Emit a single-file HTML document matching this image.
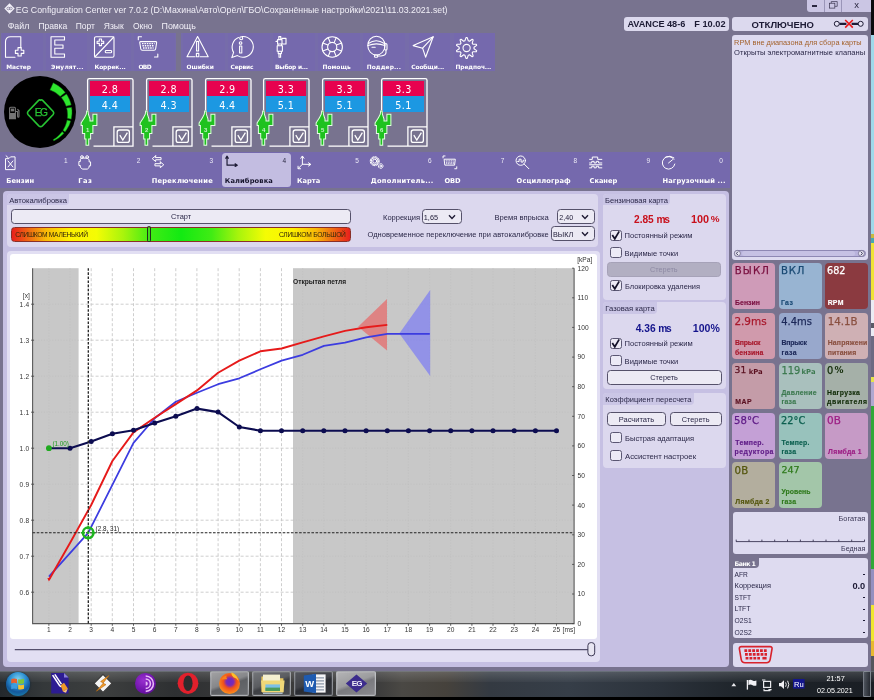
<!DOCTYPE html>
<html lang="ru"><head><meta charset="utf-8"><title>EG Configuration Center</title>
<style>
*{box-sizing:border-box;margin:0;padding:0}
html,body{width:874px;height:700px;overflow:hidden;background:#78738f}
body{font-family:"Liberation Sans",sans-serif;color:#222;position:relative}
#root{position:absolute;left:0;top:0;width:874px;height:700px;overflow:hidden;will-change:transform}
.a{position:absolute}
.t{position:absolute;white-space:nowrap;line-height:1}
.dj{font-family:"DejaVu Sans","Liberation Sans",sans-serif}
.b{font-weight:bold}
.tb{position:absolute;top:33px;height:38px;width:40px;background:#7569ad}
.tbl{position:absolute;white-space:nowrap;line-height:1;color:#fff;font-family:"DejaVu Sans","Liberation Sans",sans-serif;font-weight:bold;font-size:6.6px;top:62.5px;letter-spacing:.1px}
.tab{position:absolute;top:151px;height:37px;background:#7569ad}
.tabl{position:absolute;white-space:nowrap;line-height:1;color:#fff;font-family:"DejaVu Sans","Liberation Sans",sans-serif;font-weight:bold;font-size:7px;top:176px;letter-spacing:.55px}
.tabn{position:absolute;white-space:nowrap;line-height:1;color:#e8e6f4;font-size:6.5px;top:158px}
svg{position:absolute;overflow:visible}
.ic{fill:none;stroke:#fff;stroke-width:1.1;stroke-linecap:round;stroke-linejoin:round}
.cb{position:absolute;width:11.4px;height:11.2px;border:1px solid #5a5672;border-radius:2.5px;background:#eceaf6}
.lbl{position:absolute;white-space:nowrap;line-height:1;font-size:9.4px;color:#2b2840}
.btn{position:absolute;border:1px solid #55516a;border-radius:3.5px;background:#eceaf4}
.grp{position:absolute;background:#dcd8ee;border-radius:4px}
.tile{position:absolute;width:43px;height:46px;border-radius:4px}
.tv{position:absolute;left:2px;top:3px;white-space:nowrap;line-height:1;font-family:"DejaVu Sans","Liberation Sans",sans-serif;font-size:11.5px}
.tl{position:absolute;left:2.5px;white-space:nowrap;line-height:1;font-family:"DejaVu Sans","Liberation Sans",sans-serif;font-weight:bold;font-size:6.6px}
</style></head><body><div id="root">
<svg style="left:4px;top:3px" width="11" height="11" viewBox="0 0 11 11"><path d="M5.5 0.3 L10.7 5.5 L5.5 10.7 L0.3 5.5Z" fill="#f4f2fa"/><ellipse cx="4.4" cy="5.5" rx="1.5" ry="1.3" fill="none" stroke="#78738f" stroke-width=".7"/><ellipse cx="6.7" cy="5.5" rx="1.5" ry="1.3" fill="none" stroke="#78738f" stroke-width=".7"/></svg><div class="t" style="left:15.80px;top:6.00px;font-size:8.76px;color:#f2f0f8;">EG Configuration Center ver 7.0.2 (D:\Махина\Авто\Орёл\ГБО\Сохранённые настройки\2021\11.03.2021.set)</div><div class="t" style="left:7.70px;top:22.00px;font-size:8.79px;color:#f2f0f8;">Файл</div><div class="t" style="left:38.40px;top:22.00px;font-size:8.56px;color:#f2f0f8;">Правка</div><div class="t" style="left:75.70px;top:22.00px;font-size:8.47px;color:#f2f0f8;">Порт</div><div class="t" style="left:103.80px;top:22.00px;font-size:8.52px;color:#f2f0f8;">Язык</div><div class="t" style="left:132.90px;top:22.00px;font-size:8.48px;color:#f2f0f8;">Окно</div><div class="t" style="left:161.50px;top:22.00px;font-size:8.88px;color:#f2f0f8;">Помощь</div><div class="a" style="left:807.1px;top:0;width:64.2px;height:11.7px;background:#cbc6e4;border-radius:0 0 0 3px"></div><div class="a" style="left:823.5px;top:0;width:1px;height:11.5px;background:#9a95b8"></div><div class="a" style="left:841.2px;top:0;width:1px;height:11.5px;background:#9a95b8"></div><div class="a" style="left:812px;top:5px;width:5px;height:1.6px;background:#2b2840"></div><svg style="left:829.4px;top:1.2px" width="9" height="8" viewBox="0 0 10 9"><rect x="0.5" y="2.5" width="6" height="5.5" fill="none" stroke="#3a3650" stroke-width=".8"/><path d="M2.5 2.5V.6H9.2V6H6.5" fill="none" stroke="#3a3650" stroke-width=".8"/></svg><div class="t" style="left:854.3px;top:0.3px;font-size:9.5px;color:#2b2840">x</div><div class="a" style="left:0.8px;top:33.1px;width:175.6px;height:38.3px;background:#766caa"></div><div class="a" style="left:181.4px;top:33.1px;width:314px;height:38.3px;background:#766caa"></div><div class="tb" style="left:2px;width:41.4px;top:33.1px;height:38.3px"></div><svg style="left:3px;top:33px" width="40" height="38" viewBox="0 0 40 38"><path class="ic" d="M7.5 3.8H17.8V14.5M12 24.3H2.5V8.8Q2.5 3.8 7.5 3.8"/><path class="ic" d="M15 14.6h3.2v2.6h2.6v3.2h-2.6v2.6H15v-2.6h-2.6v-3.2H15z" stroke-width="1"/></svg><div class="t" style="left:6.30px;top:65.00px;font-size:5.90px;color:#fff;font-weight:bold;font-family:'DejaVu Sans','Liberation Sans',sans-serif;letter-spacing:-0.079px;">Мастер</div><div class="tb" style="left:46px;width:41.4px;top:33.1px;height:38.3px"></div><svg style="left:47px;top:33px" width="40" height="38" viewBox="0 0 40 38"><path class="ic" d="M4 3.8H17.5V7H7.8V12H16V15.2H7.8V21H17.5V24.3H4Z"/></svg><div class="t" style="left:50.90px;top:65.00px;font-size:5.90px;color:#fff;font-weight:bold;font-family:'DejaVu Sans','Liberation Sans',sans-serif;letter-spacing:0.169px;">Эмулят...</div><div class="tb" style="left:90px;width:41.4px;top:33.1px;height:38.3px"></div><svg style="left:91px;top:33px" width="40" height="38" viewBox="0 0 40 38"><rect class="ic" x="3.5" y="3.8" width="19.5" height="20.5" rx="1.5"/><path class="ic" d="M3.8 24 L22.8 4"/><path class="ic" d="M8.3 6h2.2v2.2h2.2v2.2h-2.2v2.2H8.3v-2.2H6.1V8.2h2.2z" stroke-width=".9"/><rect class="ic" x="14.3" y="17.5" width="6.3" height="2.3" rx=".8" stroke-width=".9"/></svg><div class="t" style="left:94.40px;top:65.00px;font-size:5.90px;color:#fff;font-weight:bold;font-family:'DejaVu Sans','Liberation Sans',sans-serif;letter-spacing:-0.069px;">Коррек...</div><div class="tb" style="left:134px;width:41.4px;top:33.1px;height:38.3px"></div><svg style="left:135px;top:33px" width="40" height="38" viewBox="0 0 40 38"><path class="ic" d="M3.3 6.8V3.8H6.5M19.5 24H22.8V21"/><path class="ic" d="M5.6 8.6H20.8Q21.8 8.6 21.6 9.8L20.6 16Q20.4 17.2 19.2 17.2H7.2Q6 17.2 5.8 16L4.8 9.8Q4.6 8.6 5.6 8.6Z"/><path d="M7 10.6h12.6M7.4 12.8h11.8M8 15h10.6" stroke="#fff" stroke-width="1.4" stroke-dasharray="1.5 .9" fill="none"/></svg><div class="t" style="left:138.40px;top:65.00px;font-size:5.90px;color:#fff;font-weight:bold;font-family:'DejaVu Sans','Liberation Sans',sans-serif;letter-spacing:-0.605px;">OBD</div><div class="tb" style="left:183px;width:41.8px;top:33.1px;height:38.3px"></div><svg style="left:183px;top:33px" width="40" height="38" viewBox="0 0 40 38"><path class="ic" d="M14.6 3.6L25.2 23.8H17.2M12 23.8H4L14.6 3.6"/><path class="ic" d="M13.6 8.4h2v9.6h-2z" stroke-width=".9"/><path class="ic" d="M13.4 20.4h2.4v3.4h-2.4z" stroke-width=".9"/></svg><div class="t" style="left:186.50px;top:65.00px;font-size:5.90px;color:#fff;font-weight:bold;font-family:'DejaVu Sans','Liberation Sans',sans-serif;letter-spacing:-0.035px;">Ошибки</div><div class="tb" style="left:228.1px;width:41.8px;top:33.1px;height:38.3px"></div><svg style="left:228.1px;top:33px" width="40" height="38" viewBox="0 0 40 38"><path class="ic" d="M14.2 3.6A10.3 10.3 0 1 1 9.5 22.6L3.8 24.6L5.6 19.4A10.3 10.3 0 0 1 10.5 4.6"/><circle class="ic" cx="13.2" cy="5.2" r="1.5" stroke-width=".9"/><circle class="ic" cx="12.6" cy="10" r="1.3" stroke-width=".9"/><path class="ic" d="M11.6 13h2.2v7h-2.2z" stroke-width=".9"/></svg><div class="t" style="left:230.60px;top:65.00px;font-size:5.90px;color:#fff;font-weight:bold;font-family:'DejaVu Sans','Liberation Sans',sans-serif;letter-spacing:-0.184px;">Сервис</div><div class="tb" style="left:273.2px;width:41.8px;top:33.1px;height:38.3px"></div><svg style="left:273.2px;top:33px" width="40" height="38" viewBox="0 0 40 38"><path class="ic" transform="translate(-5.4 0)" d="M11.2 3.6h2v3h-2zM10 6.6h4.4V11H10zM14.4 5.4h4V11h-4M10.4 11v1.8h3.6V11M9.6 12.8h5.2v5.4H9.6zM10.6 18.2v2.4h3.2v-2.4M11.4 20.6v3.6h1.6v-3.6M8.4 8.4H10"/></svg><div class="t" style="left:275.10px;top:65.00px;font-size:5.90px;color:#fff;font-weight:bold;font-family:'DejaVu Sans','Liberation Sans',sans-serif;letter-spacing:-0.238px;">Выбор и...</div><div class="tb" style="left:318.3px;width:41.8px;top:33.1px;height:38.3px"></div><svg style="left:318.3px;top:33px" width="40" height="38" viewBox="0 0 40 38"><circle class="ic" cx="14.2" cy="14" r="10.2"/><circle class="ic" cx="14.2" cy="14" r="4.6"/><path class="ic" d="M10.2 4.6L12.3 9.8M18.2 4.6L16.1 9.8M10.2 23.4L12.3 18.2M18.2 23.4L16.1 18.2M4.8 10L10 12.1M4.8 18L10 15.9M23.6 10L18.4 12.1M23.6 18L18.4 15.9"/></svg><div class="t" style="left:322.50px;top:65.00px;font-size:5.90px;color:#fff;font-weight:bold;font-family:'DejaVu Sans','Liberation Sans',sans-serif;letter-spacing:0.016px;">Помощь</div><div class="tb" style="left:363.4px;width:41.8px;top:33.1px;height:38.3px"></div><svg style="left:363.4px;top:33px" width="40" height="38" viewBox="0 0 40 38"><ellipse class="ic" cx="13.4" cy="12.6" rx="8.6" ry="9.4"/><path class="ic" d="M5.4 10.5Q13 5 21.4 10.5M5 12.6Q13.4 9.2 21.8 12.6"/><rect class="ic" x="21.6" y="10.6" width="2.4" height="6.4" rx="1.1" stroke-width=".9"/><path class="ic" d="M23 17V19.6Q23 22.6 18 23H14.4"/><rect class="ic" x="11.4" y="22" width="3.4" height="2.2" rx="1" stroke-width=".9"/><path class="ic" d="M9 14.2h3.2"/></svg><div class="t" style="left:366.70px;top:65.00px;font-size:5.90px;color:#fff;font-weight:bold;font-family:'DejaVu Sans','Liberation Sans',sans-serif;letter-spacing:0.104px;">Поддер...</div><div class="tb" style="left:408.5px;width:41.8px;top:33.1px;height:38.3px"></div><svg style="left:408.5px;top:33px" width="40" height="38" viewBox="0 0 40 38"><path class="ic" d="M24.2 3.8L4.2 12.6L13.6 15.2L16.6 24.2Z"/><path class="ic" d="M13.6 15.2L24.2 3.8"/></svg><div class="t" style="left:411.30px;top:65.00px;font-size:5.90px;color:#fff;font-weight:bold;font-family:'DejaVu Sans','Liberation Sans',sans-serif;letter-spacing:-0.117px;">Сообщи...</div><div class="tb" style="left:453.6px;width:41.8px;top:33.1px;height:38.3px"></div><svg style="left:453.6px;top:33px" width="40" height="38" viewBox="0 0 40 38"><circle class="ic" cx="12.6" cy="15" r="3.6"/><path class="ic" d="M12.0 4.6L13.2 4.6L14.3 7.8L15.5 8.2L18.2 6.3L19.2 6.9L18.2 10.1L18.9 11.2L22.3 11.2L22.7 12.4L20.0 14.3L20.0 15.7L22.7 17.6L22.3 18.8L18.9 18.8L18.2 19.9L19.2 23.1L18.2 23.7L15.5 21.8L14.3 22.2L13.2 25.4L12.0 25.4L10.9 22.2L9.7 21.8L7.0 23.7L6.0 23.1L7.0 19.9L6.3 18.8L2.9 18.8L2.5 17.6L5.2 15.7L5.2 14.3L2.5 12.4L2.9 11.2L6.3 11.2L7.0 10.1L6.0 6.9L7.0 6.3L9.7 8.2L10.9 7.8Z"/></svg><div class="t" style="left:455.50px;top:65.00px;font-size:5.90px;color:#fff;font-weight:bold;font-family:'DejaVu Sans','Liberation Sans',sans-serif;letter-spacing:-0.104px;">Предпоч...</div><div class="a" style="left:4px;top:76px;width:72px;height:72px;border-radius:50%;background:#000"></div><svg style="left:0;top:0" width="160" height="160" viewBox="0 0 160 160"><path d="M53.2 82.8L54.9 83.7L56.6 84.7L58.3 85.7L59.8 86.9L61.3 88.1L62.7 89.5L64.1 90.9L65.3 92.4L60.1 96.4L59.0 95.4L57.8 94.4L56.6 93.4L55.3 92.6L54.0 91.8L52.7 91.2L51.3 90.6L49.9 90.1Z M66.5 94.0L67.3 95.3L68.0 96.6L68.7 97.9L69.4 99.3L69.9 100.7L70.4 102.1L70.9 103.6L71.2 105.0L66.1 106.2L65.6 105.0L65.1 103.8L64.6 102.7L64.0 101.6L63.4 100.6L62.7 99.5L62.0 98.5L61.2 97.6Z M71.6 107.3L71.8 108.8L72.0 110.3L72.0 111.8L72.0 113.3L71.9 114.8L71.7 116.2L71.5 117.7L71.2 119.2L67.3 118.3L67.4 117.0L67.5 115.7L67.5 114.4L67.4 113.1L67.3 111.8L67.2 110.5L66.9 109.3L66.6 108.0Z M70.7 121.0L70.2 122.5L69.7 123.9L69.1 125.4L68.4 126.8L67.6 128.1L66.8 129.4L65.9 130.7L65.0 132.0L62.9 130.3L63.7 129.1L64.3 127.8L65.0 126.5L65.5 125.3L66.0 123.9L66.4 122.6L66.8 121.3L67.0 119.9Z M64.0 133.2L62.9 134.4L61.7 135.5L60.5 136.5L59.3 137.5L58.0 138.5L56.6 139.3L55.3 140.1L53.8 140.9L53.2 139.6L54.5 138.8L55.8 137.9L57.0 137.0L58.1 136.0L59.2 134.9L60.2 133.8L61.2 132.7L62.1 131.5Z" fill="#2ee62e" stroke="#0c5c10" stroke-width=".5"/><path d="M40.6 100.2 Q41.6 99.4 42.6 100.4 L53.2 111.4 Q54.4 113 53.2 114.6 L42.4 125.8 Q40.6 127.4 38.8 125.8 L28 114.6 Q26.8 113 28 111.4 L38.6 100.4 Q39.6 99.4 40.6 100.2Z" fill="none" stroke="#27c433" stroke-width="1.6"/><path d="M9.6 118.6V108.2Q9.6 107.2 10.6 107.2H14.4Q15.4 107.2 15.4 108.2V118.6ZM9 118.8H16M15.6 111.5H17.6V116.2Q17.6 117.2 18.3 117.2T19 116.2V110.8L17.4 109.2" fill="none" stroke="#767676" stroke-width="1.1"/><rect x="10.8" y="108.6" width="3.4" height="2.8" fill="#767676"/><rect x="9.8" y="113" width="5.4" height="5.4" fill="#767676"/><text x="40.7" y="116" font-family="Liberation Sans,sans-serif" font-size="10.2" fill="#27c433" stroke="#27c433" stroke-width=".25" text-anchor="middle" letter-spacing="-1.5">EG</text></svg><div class="a" style="left:89.8px;top:80.6px;width:40.4px;height:15.5px;background:#e7024f"></div><div class="a" style="left:89.8px;top:96px;width:40.4px;height:16.2px;background:#1c98e2"></div><div class="t dj" style="left:89.8px;top:84.6px;width:40.4px;text-align:center;font-size:9.6px;color:#fff;letter-spacing:.4px">2.8</div><div class="t dj" style="left:89.8px;top:100.8px;width:40.4px;text-align:center;font-size:9.6px;color:#fff;letter-spacing:.4px">4.4</div><svg style="left:77.3px;top:72px" width="70" height="80" viewBox="0 0 70 80"><path d="M10.6 38.5V8.3Q10.6 6.6 12.3 6.6H54.3Q56 6.6 56 8.3V74.1H16.5" fill="none" stroke="#fff" stroke-width="1.3"/><path d="M36.9 74.1V54.9H56" fill="none" stroke="#fff" stroke-width="1.3"/><rect x="40.2" y="58" width="12.2" height="12.4" rx="2.2" fill="none" stroke="#fff" stroke-width="1.3"/><path d="M42.8 63.2L45.8 68L50.4 60.6" fill="none" stroke="#fff" stroke-width="1.3"/><defs><clipPath id="injc"><path d="M9.2 38.4H11.5L11.9 42L13.5 47V48.4H15.4V41.8H20.4V54H16.4V61.9H14.1V67.5H12.2V73.7H8.5V67.5H7.2V61.9H4.9V54H3.6V50.8L7 45.6L8.8 42Z"/></clipPath></defs><path d="M9.2 38.4H11.5L11.9 42L13.5 47V48.4H15.4V41.8H20.4V54H16.4V61.9H14.1V67.5H12.2V73.7H8.5V67.5H7.2V61.9H4.9V54H3.6V50.8L7 45.6L8.8 42Z" fill="#1fc21f" stroke="#e8fce8" stroke-width="2" stroke-linejoin="miter" clip-path="url(#injc)"/><text x="10.6" y="60.3" font-family="Liberation Sans,sans-serif" font-weight="bold" font-size="6" fill="#c8f4c8" text-anchor="middle">1</text></svg><div class="a" style="left:148.5px;top:80.6px;width:40.4px;height:15.5px;background:#e7024f"></div><div class="a" style="left:148.5px;top:96px;width:40.4px;height:16.2px;background:#1c98e2"></div><div class="t dj" style="left:148.5px;top:84.6px;width:40.4px;text-align:center;font-size:9.6px;color:#fff;letter-spacing:.4px">2.8</div><div class="t dj" style="left:148.5px;top:100.8px;width:40.4px;text-align:center;font-size:9.6px;color:#fff;letter-spacing:.4px">4.3</div><svg style="left:136.0px;top:72px" width="70" height="80" viewBox="0 0 70 80"><path d="M10.6 38.5V8.3Q10.6 6.6 12.3 6.6H54.3Q56 6.6 56 8.3V74.1H16.5" fill="none" stroke="#fff" stroke-width="1.3"/><path d="M36.9 74.1V54.9H56" fill="none" stroke="#fff" stroke-width="1.3"/><rect x="40.2" y="58" width="12.2" height="12.4" rx="2.2" fill="none" stroke="#fff" stroke-width="1.3"/><path d="M42.8 63.2L45.8 68L50.4 60.6" fill="none" stroke="#fff" stroke-width="1.3"/><path d="M9.2 38.4H11.5L11.9 42L13.5 47V48.4H15.4V41.8H20.4V54H16.4V61.9H14.1V67.5H12.2V73.7H8.5V67.5H7.2V61.9H4.9V54H3.6V50.8L7 45.6L8.8 42Z" fill="#1fc21f" stroke="#e8fce8" stroke-width="2" stroke-linejoin="miter" clip-path="url(#injc)"/><text x="10.6" y="60.3" font-family="Liberation Sans,sans-serif" font-weight="bold" font-size="6" fill="#c8f4c8" text-anchor="middle">2</text></svg><div class="a" style="left:207.2px;top:80.6px;width:40.4px;height:15.5px;background:#e7024f"></div><div class="a" style="left:207.2px;top:96px;width:40.4px;height:16.2px;background:#1c98e2"></div><div class="t dj" style="left:207.2px;top:84.6px;width:40.4px;text-align:center;font-size:9.6px;color:#fff;letter-spacing:.4px">2.9</div><div class="t dj" style="left:207.2px;top:100.8px;width:40.4px;text-align:center;font-size:9.6px;color:#fff;letter-spacing:.4px">4.4</div><svg style="left:194.7px;top:72px" width="70" height="80" viewBox="0 0 70 80"><path d="M10.6 38.5V8.3Q10.6 6.6 12.3 6.6H54.3Q56 6.6 56 8.3V74.1H16.5" fill="none" stroke="#fff" stroke-width="1.3"/><path d="M36.9 74.1V54.9H56" fill="none" stroke="#fff" stroke-width="1.3"/><rect x="40.2" y="58" width="12.2" height="12.4" rx="2.2" fill="none" stroke="#fff" stroke-width="1.3"/><path d="M42.8 63.2L45.8 68L50.4 60.6" fill="none" stroke="#fff" stroke-width="1.3"/><path d="M9.2 38.4H11.5L11.9 42L13.5 47V48.4H15.4V41.8H20.4V54H16.4V61.9H14.1V67.5H12.2V73.7H8.5V67.5H7.2V61.9H4.9V54H3.6V50.8L7 45.6L8.8 42Z" fill="#1fc21f" stroke="#e8fce8" stroke-width="2" stroke-linejoin="miter" clip-path="url(#injc)"/><text x="10.6" y="60.3" font-family="Liberation Sans,sans-serif" font-weight="bold" font-size="6" fill="#c8f4c8" text-anchor="middle">3</text></svg><div class="a" style="left:265.9px;top:80.6px;width:40.4px;height:15.5px;background:#e7024f"></div><div class="a" style="left:265.9px;top:96px;width:40.4px;height:16.2px;background:#1c98e2"></div><div class="t dj" style="left:265.9px;top:84.6px;width:40.4px;text-align:center;font-size:9.6px;color:#fff;letter-spacing:.4px">3.3</div><div class="t dj" style="left:265.9px;top:100.8px;width:40.4px;text-align:center;font-size:9.6px;color:#fff;letter-spacing:.4px">5.1</div><svg style="left:253.4px;top:72px" width="70" height="80" viewBox="0 0 70 80"><path d="M10.6 38.5V8.3Q10.6 6.6 12.3 6.6H54.3Q56 6.6 56 8.3V74.1H16.5" fill="none" stroke="#fff" stroke-width="1.3"/><path d="M36.9 74.1V54.9H56" fill="none" stroke="#fff" stroke-width="1.3"/><rect x="40.2" y="58" width="12.2" height="12.4" rx="2.2" fill="none" stroke="#fff" stroke-width="1.3"/><path d="M42.8 63.2L45.8 68L50.4 60.6" fill="none" stroke="#fff" stroke-width="1.3"/><path d="M9.2 38.4H11.5L11.9 42L13.5 47V48.4H15.4V41.8H20.4V54H16.4V61.9H14.1V67.5H12.2V73.7H8.5V67.5H7.2V61.9H4.9V54H3.6V50.8L7 45.6L8.8 42Z" fill="#1fc21f" stroke="#e8fce8" stroke-width="2" stroke-linejoin="miter" clip-path="url(#injc)"/><text x="10.6" y="60.3" font-family="Liberation Sans,sans-serif" font-weight="bold" font-size="6" fill="#c8f4c8" text-anchor="middle">4</text></svg><div class="a" style="left:324.6px;top:80.6px;width:40.4px;height:15.5px;background:#e7024f"></div><div class="a" style="left:324.6px;top:96px;width:40.4px;height:16.2px;background:#1c98e2"></div><div class="t dj" style="left:324.6px;top:84.6px;width:40.4px;text-align:center;font-size:9.6px;color:#fff;letter-spacing:.4px">3.3</div><div class="t dj" style="left:324.6px;top:100.8px;width:40.4px;text-align:center;font-size:9.6px;color:#fff;letter-spacing:.4px">5.1</div><svg style="left:312.1px;top:72px" width="70" height="80" viewBox="0 0 70 80"><path d="M10.6 38.5V8.3Q10.6 6.6 12.3 6.6H54.3Q56 6.6 56 8.3V74.1H16.5" fill="none" stroke="#fff" stroke-width="1.3"/><path d="M36.9 74.1V54.9H56" fill="none" stroke="#fff" stroke-width="1.3"/><rect x="40.2" y="58" width="12.2" height="12.4" rx="2.2" fill="none" stroke="#fff" stroke-width="1.3"/><path d="M42.8 63.2L45.8 68L50.4 60.6" fill="none" stroke="#fff" stroke-width="1.3"/><path d="M9.2 38.4H11.5L11.9 42L13.5 47V48.4H15.4V41.8H20.4V54H16.4V61.9H14.1V67.5H12.2V73.7H8.5V67.5H7.2V61.9H4.9V54H3.6V50.8L7 45.6L8.8 42Z" fill="#1fc21f" stroke="#e8fce8" stroke-width="2" stroke-linejoin="miter" clip-path="url(#injc)"/><text x="10.6" y="60.3" font-family="Liberation Sans,sans-serif" font-weight="bold" font-size="6" fill="#c8f4c8" text-anchor="middle">5</text></svg><div class="a" style="left:383.3px;top:80.6px;width:40.4px;height:15.5px;background:#e7024f"></div><div class="a" style="left:383.3px;top:96px;width:40.4px;height:16.2px;background:#1c98e2"></div><div class="t dj" style="left:383.3px;top:84.6px;width:40.4px;text-align:center;font-size:9.6px;color:#fff;letter-spacing:.4px">3.3</div><div class="t dj" style="left:383.3px;top:100.8px;width:40.4px;text-align:center;font-size:9.6px;color:#fff;letter-spacing:.4px">5.1</div><svg style="left:370.8px;top:72px" width="70" height="80" viewBox="0 0 70 80"><path d="M10.6 38.5V8.3Q10.6 6.6 12.3 6.6H54.3Q56 6.6 56 8.3V74.1H16.5" fill="none" stroke="#fff" stroke-width="1.3"/><path d="M36.9 74.1V54.9H56" fill="none" stroke="#fff" stroke-width="1.3"/><rect x="40.2" y="58" width="12.2" height="12.4" rx="2.2" fill="none" stroke="#fff" stroke-width="1.3"/><path d="M42.8 63.2L45.8 68L50.4 60.6" fill="none" stroke="#fff" stroke-width="1.3"/><path d="M9.2 38.4H11.5L11.9 42L13.5 47V48.4H15.4V41.8H20.4V54H16.4V61.9H14.1V67.5H12.2V73.7H8.5V67.5H7.2V61.9H4.9V54H3.6V50.8L7 45.6L8.8 42Z" fill="#1fc21f" stroke="#e8fce8" stroke-width="2" stroke-linejoin="miter" clip-path="url(#injc)"/><text x="10.6" y="60.3" font-family="Liberation Sans,sans-serif" font-weight="bold" font-size="6" fill="#c8f4c8" text-anchor="middle">6</text></svg><div class="a" style="left:0;top:151.7px;width:730px;height:36.5px;background:#7569ad"></div><svg style="left:3.4px;top:151.8px" width="21.6" height="21.6" viewBox="0 0 24 24"><path class="ic" d="M3.2 7.4H6.4L8.4 5.4H13.4V19.6H3.2Z"/><path class="ic" d="M3.4 4.2L6 6.6M5.6 10L11 16.6M11 10L5.6 16.6"/></svg><div class="t" style="left:6.20px;top:178.00px;font-size:6.70px;color:#fff;font-weight:bold;font-family:'DejaVu Sans','Liberation Sans',sans-serif;letter-spacing:0.121px;">Бензин</div><div class="tabn" style="left:64.0px;color:#eceaf6">1</div><svg style="left:76.2px;top:151.8px" width="21.6" height="21.6" viewBox="0 0 24 24"><path class="ic" d="M6.4 6.8H12.8L14.6 8.8V11H16.2V15.4H14.6V17.2L12.6 19H7L4.8 16.8V15H3.2V10.6H4.8V8.4Z"/><circle class="ic" cx="6.6" cy="5.6" r="1.5"/><circle class="ic" cx="12.4" cy="5.6" r="1.5"/></svg><div class="t" style="left:78.30px;top:178.00px;font-size:6.70px;color:#fff;font-weight:bold;font-family:'DejaVu Sans','Liberation Sans',sans-serif;letter-spacing:0.508px;">Газ</div><div class="tabn" style="left:136.8px;color:#eceaf6">2</div><svg style="left:149.0px;top:151.8px" width="21.6" height="21.6" viewBox="0 0 24 24"><path class="ic" d="M7.4 4.2L3.6 7.4L7.4 10.6V8.6H13.4V6.2H7.4ZM12.6 11L16.4 14.2L12.6 17.4V15.4H6.6V13H12.6Z"/></svg><div class="t" style="left:151.70px;top:178.00px;font-size:6.70px;color:#fff;font-weight:bold;font-family:'DejaVu Sans','Liberation Sans',sans-serif;letter-spacing:0.239px;">Переключение</div><div class="tabn" style="left:209.6px;color:#eceaf6">3</div><div class="a" style="left:222px;top:153px;width:69.3px;height:33.7px;background:#c3bde1;border-radius:3.5px"></div><svg style="left:221.8px;top:151.8px" width="21.6" height="21.6" viewBox="0 0 24 24"><path class="ic" d="M5.6 5.6V14.6H16.2M4.2 7L5.6 4.6L7 7M14.6 13.2L17 14.6L14.6 16" style="stroke:#1c1a34;stroke-width:1.3"/></svg><div class="t" style="left:224.80px;top:178.00px;font-size:6.70px;color:#16142c;font-weight:bold;font-family:'DejaVu Sans','Liberation Sans',sans-serif;letter-spacing:0.124px;">Калибровка</div><div class="tabn" style="left:282.4px;color:#2a2742">4</div><svg style="left:294.6px;top:151.8px" width="21.6" height="21.6" viewBox="0 0 24 24"><path class="ic" d="M8.2 5V13.6L3.6 18.4M8.2 13.6L17 13.8M6.4 7L8.2 4.4L10 7M15 12L17.6 13.8L15 15.6M3.4 15.8V18.6H6.2"/></svg><div class="t" style="left:296.90px;top:178.00px;font-size:6.70px;color:#fff;font-weight:bold;font-family:'DejaVu Sans','Liberation Sans',sans-serif;letter-spacing:0.025px;">Карта</div><div class="tabn" style="left:355.2px;color:#eceaf6">5</div><svg style="left:367.4px;top:151.8px" width="21.6" height="21.6" viewBox="0 0 24 24"><circle class="ic" cx="8.6" cy="10.2" r="2.2"/><circle class="ic" cx="8.6" cy="10.2" r="5" stroke-dasharray="2.4 1.5" stroke-width="2"/><circle class="ic" cx="8.6" cy="10.2" r="3.9"/><circle class="ic" cx="15.2" cy="15.6" r="1"/><circle class="ic" cx="15.2" cy="15.6" r="2.6" stroke-dasharray="1.5 1.2" stroke-width="1.5"/></svg><div class="t" style="left:370.70px;top:178.00px;font-size:6.70px;color:#fff;font-weight:bold;font-family:'DejaVu Sans','Liberation Sans',sans-serif;letter-spacing:0.274px;">Дополнитель...</div><div class="tabn" style="left:428.0px;color:#eceaf6">6</div><svg style="left:440.2px;top:151.8px" width="21.6" height="21.6" viewBox="0 0 24 24"><path class="ic" d="M3.4 6.6V4.4H5.6M16.4 18.6H18.6V16.4"/><path class="ic" d="M5 8H17L16.2 14.6H5.8Z"/><path d="M6.4 9.8h9.4M6.6 11.4h9M6.8 13h8.6" stroke="#fff" stroke-width="1" stroke-dasharray="1.2 .7" fill="none"/></svg><div class="t" style="left:444.50px;top:178.00px;font-size:6.70px;color:#fff;font-weight:bold;font-family:'DejaVu Sans','Liberation Sans',sans-serif;letter-spacing:-0.132px;">OBD</div><div class="tabn" style="left:500.8px;color:#eceaf6">7</div><svg style="left:513.0px;top:151.8px" width="21.6" height="21.6" viewBox="0 0 24 24"><circle class="ic" cx="8.6" cy="9.6" r="5.2"/><path class="ic" d="M12.4 13.4L17.6 18.6" stroke-width="2.2"/><path class="ic" d="M5.2 10.6H6.8V8H9V11.2H11.2V9.2H12"/></svg><div class="t" style="left:516.60px;top:178.00px;font-size:6.70px;color:#fff;font-weight:bold;font-family:'DejaVu Sans','Liberation Sans',sans-serif;letter-spacing:0.099px;">Осциллограф</div><div class="tabn" style="left:573.6px;color:#eceaf6">8</div><svg style="left:585.8px;top:151.8px" width="21.6" height="21.6" viewBox="0 0 24 24"><path class="ic" d="M4 8.2H7V5.6H13V8.2H17.6M4 12.2H6.4V10.4H9V12.2H11.4V10.4H14V12.2H17.6M4 17.6H6.4V15.8H9V17.6H11.4V15.8H14V17.6H17.6M4 14.2H17.6" stroke-width=".9"/></svg><div class="t" style="left:589.50px;top:178.00px;font-size:6.70px;color:#fff;font-weight:bold;font-family:'DejaVu Sans','Liberation Sans',sans-serif;letter-spacing:-0.031px;">Сканер</div><div class="tabn" style="left:646.4px;color:#eceaf6">9</div><svg style="left:658.6px;top:151.8px" width="21.6" height="21.6" viewBox="0 0 24 24"><path class="ic" d="M16.6 8.2A7 7 0 1 0 17.6 13.4M10.6 12.2L15 8.6"/><path class="ic" d="M7.4 5.6Q12.4 3.2 16.6 6.4" /></svg><div class="t" style="left:662.40px;top:178.00px;font-size:6.70px;color:#fff;font-weight:bold;font-family:'DejaVu Sans','Liberation Sans',sans-serif;letter-spacing:0.14px;">Нагрузочный ...</div><div class="tabn" style="left:719.2px;color:#eceaf6">0</div><div class="a" style="left:2.8px;top:190.6px;width:726.4px;height:476px;background:#c6c0e3;border-radius:4px"></div><div class="grp" style="left:7.2px;top:193.5px;width:591.3px;height:53.4px"></div><div class="a" style="left:7.2px;top:193.5px;width:61.8px;height:11.6px;background:#cbc6e6;border-radius:4px 0 4px 0"></div><div class="t" style="left:9.30px;top:197.00px;font-size:7.62px;color:#2b2848;">Автокалибровка</div><div class="btn" style="left:10.9px;top:209.2px;width:340.6px;height:15.2px"></div><div class="t" style="left:171.00px;top:213.00px;font-size:7.43px;color:#2b2848;">Старт</div><div class="a" style="left:10.9px;top:226.8px;width:340.6px;height:14.9px;border-radius:3.5px;border:1px solid #8a3028;background:linear-gradient(90deg,#e8201c 0%,#ee5a14 4%,#f8b808 10%,#fef200 17%,#f4fc04 25%,#a8f40c 33%,#40ec14 41%,#12ea12 50%,#40ec14 59%,#a8f40c 67%,#f4fc04 75%,#fef200 83%,#f8b808 90%,#ee5a14 96%,#e8201c 100%)"></div><div class="t" style="left:15.20px;top:232.00px;font-size:6.70px;color:#33260a;letter-spacing:-0.337px;">СЛИШКОМ МАЛЕНЬКИЙ</div><div class="t" style="left:279.00px;top:232.00px;font-size:6.70px;color:#33260a;letter-spacing:-0.276px;">СЛИШКОМ БОЛЬШОЙ</div><div class="a" style="left:146.9px;top:226.4px;width:4.6px;height:15.8px;border:1.1px solid #20301c;border-radius:1.5px;background:rgba(60,200,40,.4)"></div><div class="t" style="left:383.00px;top:214.00px;font-size:7.52px;color:#2b2848;">Коррекция</div><div class="btn" style="left:421.9px;top:209.2px;width:40.3px;height:15.2px"></div><div class="t" style="left:423.80px;top:214.00px;font-size:7.30px;color:#1f1c38;">1,65</div><svg style="left:448.0px;top:214.4px" width="8" height="6" viewBox="0 0 8 6"><path d="M1 1.2L4 4.4L7 1.2" fill="none" stroke="#1f1c34" stroke-width="1.4"/></svg><div class="t" style="left:494.40px;top:214.00px;font-size:7.62px;color:#2b2848;">Время впрыска</div><div class="btn" style="left:556.9px;top:209.2px;width:38.4px;height:15.2px"></div><div class="t" style="left:559.30px;top:215.00px;font-size:7.14px;color:#1f1c38;">2,40</div><svg style="left:581.0999999999999px;top:214.4px" width="8" height="6" viewBox="0 0 8 6"><path d="M1 1.2L4 4.4L7 1.2" fill="none" stroke="#1f1c34" stroke-width="1.4"/></svg><div class="t" style="left:367.60px;top:231.00px;font-size:7.49px;color:#2b2848;">Одновременное переключение при автокалибровке</div><div class="btn" style="left:550.8px;top:226.3px;width:44.5px;height:14.9px"></div><div class="t" style="left:552.90px;top:231.00px;font-size:7.27px;color:#1f1c38;">ВЫКЛ</div><svg style="left:581.0999999999999px;top:231.0px" width="8" height="6" viewBox="0 0 8 6"><path d="M1 1.2L4 4.4L7 1.2" fill="none" stroke="#1f1c34" stroke-width="1.4"/></svg><div class="a" style="left:7.2px;top:250.6px;width:592.8px;height:411.8px;background:#e2dff3;border-radius:4px"></div><div class="a" style="left:10.2px;top:253.8px;width:586.6px;height:385px;background:#fff;border-radius:3px"></div><svg style="left:0;top:0" width="874" height="700" viewBox="0 0 874 700" font-family="Liberation Sans,sans-serif"><rect x="32.6" y="268.2" width="46.0" height="355.4" fill="#c8c8c8"/><rect x="293" y="268.2" width="281.1" height="355.4" fill="#c8c8c8"/><path d="M48.9 268.2V623.6M70.0 268.2V623.6M302.7 268.2V623.6M323.8 268.2V623.6M345.0 268.2V623.6M366.1 268.2V623.6M387.3 268.2V623.6M408.4 268.2V623.6M429.6 268.2V623.6M450.7 268.2V623.6M471.9 268.2V623.6M493.0 268.2V623.6M514.2 268.2V623.6M535.4 268.2V623.6M556.5 268.2V623.6M32.6 304.2H78.6M293 304.2H574.1M32.6 340.2H78.6M293 340.2H574.1M32.6 376.2H78.6M293 376.2H574.1M32.6 412.2H78.6M293 412.2H574.1M32.6 448.2H78.6M293 448.2H574.1M32.6 484.2H78.6M293 484.2H574.1M32.6 520.2H78.6M293 520.2H574.1M32.6 556.2H78.6M293 556.2H574.1M32.6 592.2H78.6M293 592.2H574.1" stroke="#c0c0c0" stroke-width=".8" stroke-dasharray="1.2 1.6" fill="none"/><path d="M91.2 268.2V623.6M112.3 268.2V623.6M133.5 268.2V623.6M154.7 268.2V623.6M175.8 268.2V623.6M196.9 268.2V623.6M218.1 268.2V623.6M239.2 268.2V623.6M260.4 268.2V623.6M281.5 268.2V623.6M80.6 304.2H293M80.6 340.2H293M80.6 376.2H293M80.6 412.2H293M80.6 448.2H293M80.6 484.2H293M80.6 520.2H293M80.6 556.2H293M80.6 592.2H293" stroke="#c8c8c8" stroke-width=".9" stroke-dasharray="3 2" fill="none"/><path d="M32.6 268.2V623.6H574.1V268.2" stroke="#5a5a5a" stroke-width="1.1" fill="none"/><path d="M48.9 623.6v2.2M70.0 623.6v2.2M91.2 623.6v2.2M112.3 623.6v2.2M133.5 623.6v2.2M154.7 623.6v2.2M175.8 623.6v2.2M196.9 623.6v2.2M218.1 623.6v2.2M239.2 623.6v2.2M260.4 623.6v2.2M281.5 623.6v2.2M302.7 623.6v2.2M323.8 623.6v2.2M345.0 623.6v2.2M366.1 623.6v2.2M387.3 623.6v2.2M408.4 623.6v2.2M429.6 623.6v2.2M450.7 623.6v2.2M471.9 623.6v2.2M493.0 623.6v2.2M514.2 623.6v2.2M535.4 623.6v2.2M556.5 623.6v2.2M31.1 304.2h3M31.1 340.2h3M31.1 376.2h3M31.1 412.2h3M31.1 448.2h3M31.1 484.2h3M31.1 520.2h3M31.1 556.2h3M31.1 592.2h3M572.1 623.6h2M572.1 594.0h2M572.1 564.4h2M572.1 534.8h2M572.1 505.1h2M572.1 475.5h2M572.1 445.9h2M572.1 416.3h2M572.1 386.7h2M572.1 357.1h2M572.1 327.4h2M572.1 297.8h2M572.1 268.2h2" stroke="#4a4a4a" stroke-width=".9" fill="none"/><text x="48.9" y="631.6" font-size="6.6" fill="#333" text-anchor="middle">1</text><text x="70.0" y="631.6" font-size="6.6" fill="#333" text-anchor="middle">2</text><text x="91.2" y="631.6" font-size="6.6" fill="#333" text-anchor="middle">3</text><text x="112.3" y="631.6" font-size="6.6" fill="#333" text-anchor="middle">4</text><text x="133.5" y="631.6" font-size="6.6" fill="#333" text-anchor="middle">5</text><text x="154.7" y="631.6" font-size="6.6" fill="#333" text-anchor="middle">6</text><text x="175.8" y="631.6" font-size="6.6" fill="#333" text-anchor="middle">7</text><text x="196.9" y="631.6" font-size="6.6" fill="#333" text-anchor="middle">8</text><text x="218.1" y="631.6" font-size="6.6" fill="#333" text-anchor="middle">9</text><text x="239.2" y="631.6" font-size="6.6" fill="#333" text-anchor="middle">10</text><text x="260.4" y="631.6" font-size="6.6" fill="#333" text-anchor="middle">11</text><text x="281.5" y="631.6" font-size="6.6" fill="#333" text-anchor="middle">12</text><text x="302.7" y="631.6" font-size="6.6" fill="#333" text-anchor="middle">13</text><text x="323.8" y="631.6" font-size="6.6" fill="#333" text-anchor="middle">14</text><text x="345.0" y="631.6" font-size="6.6" fill="#333" text-anchor="middle">15</text><text x="366.1" y="631.6" font-size="6.6" fill="#333" text-anchor="middle">16</text><text x="387.3" y="631.6" font-size="6.6" fill="#333" text-anchor="middle">17</text><text x="408.4" y="631.6" font-size="6.6" fill="#333" text-anchor="middle">18</text><text x="429.6" y="631.6" font-size="6.6" fill="#333" text-anchor="middle">19</text><text x="450.7" y="631.6" font-size="6.6" fill="#333" text-anchor="middle">20</text><text x="471.9" y="631.6" font-size="6.6" fill="#333" text-anchor="middle">21</text><text x="493.0" y="631.6" font-size="6.6" fill="#333" text-anchor="middle">22</text><text x="514.2" y="631.6" font-size="6.6" fill="#333" text-anchor="middle">23</text><text x="535.4" y="631.6" font-size="6.6" fill="#333" text-anchor="middle">24</text><text x="556.5" y="631.6" font-size="6.6" fill="#333" text-anchor="middle">25</text><text x="562.6" y="631.6" font-size="6.6" fill="#333">[ms]</text><text x="29.6" y="306.6" font-size="6.6" fill="#333" text-anchor="end" letter-spacing=".3">1.4</text><text x="29.6" y="342.6" font-size="6.6" fill="#333" text-anchor="end" letter-spacing=".3">1.3</text><text x="29.6" y="378.6" font-size="6.6" fill="#333" text-anchor="end" letter-spacing=".3">1.2</text><text x="29.6" y="414.6" font-size="6.6" fill="#333" text-anchor="end" letter-spacing=".3">1.1</text><text x="29.6" y="450.6" font-size="6.6" fill="#333" text-anchor="end" letter-spacing=".3">1.0</text><text x="29.6" y="486.6" font-size="6.6" fill="#333" text-anchor="end" letter-spacing=".3">0.9</text><text x="29.6" y="522.6" font-size="6.6" fill="#333" text-anchor="end" letter-spacing=".3">0.8</text><text x="29.6" y="558.6" font-size="6.6" fill="#333" text-anchor="end" letter-spacing=".3">0.7</text><text x="29.6" y="594.6" font-size="6.6" fill="#333" text-anchor="end" letter-spacing=".3">0.6</text><text x="29.8" y="298" font-size="6.6" fill="#333" text-anchor="end">[x]</text><text x="577.6" y="626.0" font-size="6.6" fill="#333">0</text><text x="577.6" y="596.4" font-size="6.6" fill="#333">10</text><text x="577.6" y="566.8" font-size="6.6" fill="#333">20</text><text x="577.6" y="537.1" font-size="6.6" fill="#333">30</text><text x="577.6" y="507.5" font-size="6.6" fill="#333">40</text><text x="577.6" y="477.9" font-size="6.6" fill="#333">50</text><text x="577.6" y="448.3" font-size="6.6" fill="#333">60</text><text x="577.6" y="418.7" font-size="6.6" fill="#333">70</text><text x="577.6" y="389.1" font-size="6.6" fill="#333">80</text><text x="577.6" y="359.4" font-size="6.6" fill="#333">90</text><text x="577.6" y="329.8" font-size="6.6" fill="#333">100</text><text x="577.6" y="300.2" font-size="6.6" fill="#333">110</text><text x="577.6" y="270.6" font-size="6.6" fill="#333">120</text><text x="577.2" y="262.3" font-size="6.6" fill="#333">[kPa]</text><text x="293" y="283.6" font-size="6.65" font-weight="bold" fill="#222">Открытая петля</text><path d="M358.1 326.7L387 298.9V350.5Z" fill="#f04a4a" fill-opacity=".55"/><path d="M399.3 333.6L430.2 290V376.1Z" fill="#7a7af4" fill-opacity=".7"/><path d="M48.9 576.6L88.2 532.9L133.5 442.9L154.7 418.2L175.8 401.8L197.0 392.7L218.1 384.2L239.3 378.3L260.4 369.3L281.6 360.6L302.7 354.8L323.9 345.9L345.0 342.6L366.2 337.3L387.3 333.8L429.8 333.8" stroke="#3c3ce0" stroke-width="1.75" fill="none" stroke-linejoin="round"/><path d="M48.9 580.0L70.0 543.0L91.2 505.0L112.4 461.0L133.5 432.4L154.7 417.8L175.8 404.1L197.0 390.4L218.1 372.8L239.3 360.6L260.4 351.3L281.6 348.5L302.7 342.3L323.9 336.3L345.0 330.9L366.2 327.2L387.3 324.9" stroke="#e61a1a" stroke-width="1.9" fill="none" stroke-linejoin="round"/><path d="M47.4 578L48.9 581.6L50.4 578Z" fill="#e61a1a"/><path d="M48.9 448.2L70.0 448.2L91.2 441.4L112.4 433.7L133.5 430.3L154.7 423.0L175.8 416.2L197.0 408.6L218.1 412.1L239.3 427.0L260.4 430.7L281.5 430.7L302.7 430.7L323.8 430.7L345.0 430.7L366.1 430.7L387.3 430.7L408.4 430.7L429.6 430.7L450.7 430.7L471.9 430.7L493.0 430.7L514.2 430.7L535.4 430.7L556.5 430.7" stroke="#0c0c50" stroke-width="2.1" fill="none" stroke-linejoin="round"/><circle cx="70.0" cy="448.2" r="2.5" fill="#0c0c50"/><circle cx="91.2" cy="441.4" r="2.5" fill="#0c0c50"/><circle cx="112.4" cy="433.7" r="2.5" fill="#0c0c50"/><circle cx="133.5" cy="430.3" r="2.5" fill="#0c0c50"/><circle cx="154.7" cy="423.0" r="2.5" fill="#0c0c50"/><circle cx="175.8" cy="416.2" r="2.5" fill="#0c0c50"/><circle cx="197.0" cy="408.6" r="2.5" fill="#0c0c50"/><circle cx="218.1" cy="412.1" r="2.5" fill="#0c0c50"/><circle cx="239.3" cy="427.0" r="2.5" fill="#0c0c50"/><circle cx="260.4" cy="430.7" r="2.5" fill="#0c0c50"/><circle cx="281.5" cy="430.7" r="2.5" fill="#0c0c50"/><circle cx="302.7" cy="430.7" r="2.5" fill="#0c0c50"/><circle cx="323.8" cy="430.7" r="2.5" fill="#0c0c50"/><circle cx="345.0" cy="430.7" r="2.5" fill="#0c0c50"/><circle cx="366.1" cy="430.7" r="2.5" fill="#0c0c50"/><circle cx="387.3" cy="430.7" r="2.5" fill="#0c0c50"/><circle cx="408.4" cy="430.7" r="2.5" fill="#0c0c50"/><circle cx="429.6" cy="430.7" r="2.5" fill="#0c0c50"/><circle cx="450.7" cy="430.7" r="2.5" fill="#0c0c50"/><circle cx="471.9" cy="430.7" r="2.5" fill="#0c0c50"/><circle cx="493.0" cy="430.7" r="2.5" fill="#0c0c50"/><circle cx="514.2" cy="430.7" r="2.5" fill="#0c0c50"/><circle cx="535.4" cy="430.7" r="2.5" fill="#0c0c50"/><circle cx="556.5" cy="430.7" r="2.5" fill="#0c0c50"/><circle cx="48.9" cy="448.2" r="2.9" fill="#1faa1f"/><text x="52.4" y="446.4" font-size="6.3" fill="#1f9a1f">(1.00)</text><path d="M88.3 268.2V623.6" stroke="#222" stroke-width="1.3" stroke-dasharray="2.6 1.5" fill="none"/><path d="M32.6 532.8H574.1" stroke="#222" stroke-width="1.1" stroke-dasharray="2.6 1.5" fill="none"/><circle cx="88.2" cy="532.8" r="5.3" fill="none" stroke="#1fb41f" stroke-width="2.5"/><path d="M88.2 525.6v4M88.2 536v4M81 532.8h4M91.4 532.8h4" stroke="#1fb41f" stroke-width="1.4"/><circle cx="88.2" cy="532.8" r="1.3" fill="#1fb41f"/><text x="95.6" y="531" font-size="6.3" fill="#222">(2.8, 31)</text><path d="M14.8 649.6H589" stroke="#55506e" stroke-width="1.2"/><rect x="587.9" y="642.6" width="6.8" height="13.2" rx="3" fill="#e8e6f2" stroke="#3c3854" stroke-width="1"/></svg><div class="grp" style="left:603.3px;top:193.5px;width:122.7px;height:106px"></div><div class="a" style="left:603.3px;top:193.5px;width:67px;height:11.6px;background:#cbc6e6;border-radius:4px 0 4px 0"></div><div class="t" style="left:605.00px;top:197.00px;font-size:7.56px;color:#2b2848;">Бензиновая карта</div><div class="t" style="left:634.00px;top:215.00px;font-size:10.17px;color:#c8101c;font-weight:bold;">2.85</div><div class="t" style="left:656.50px;top:215.00px;font-size:10.20px;color:#c8101c;font-weight:bold;letter-spacing:-1.242px;">ms</div><div class="t" style="left:691.00px;top:214.00px;font-size:10.85px;color:#c8101c;font-weight:bold;">100</div><div class="t" style="left:710.80px;top:214.00px;font-size:9.90px;color:#c8101c;font-weight:bold;">%</div><div class="cb" style="left:610.3px;top:229.6px"></div><svg style="left:610.3px;top:229.6px" width="11" height="11" viewBox="0 0 11 11"><path d="M2.3 5L4.8 8.8L9.2 1.4" fill="none" stroke="#14122a" stroke-width="1.7"/></svg><div class="t" style="left:624.60px;top:232.00px;font-size:7.56px;color:#2b2848;">Постоянный режим</div><div class="cb" style="left:610.3px;top:246.6px"></div><div class="t" style="left:624.60px;top:250.00px;font-size:7.54px;color:#2b2848;">Видимые точки</div><div class="btn" style="left:607.4px;top:262px;width:113.8px;height:14.8px;background:#b2afc2;border-color:#a6a2b8"></div><div class="t" style="left:650.00px;top:266.00px;font-size:7.30px;color:#8e8aa4;">Стереть</div><div class="cb" style="left:610.3px;top:280.2px"></div><svg style="left:610.3px;top:280.2px" width="11" height="11" viewBox="0 0 11 11"><path d="M2.3 5L4.8 8.8L9.2 1.4" fill="none" stroke="#14122a" stroke-width="1.7"/></svg><div class="t" style="left:625.00px;top:283.00px;font-size:7.41px;color:#2b2848;">Блокировка удаления</div><div class="grp" style="left:603.3px;top:302px;width:122.7px;height:87.4px"></div><div class="a" style="left:603.3px;top:302px;width:54px;height:11.6px;background:#cbc6e6;border-radius:4px 0 4px 0"></div><div class="t" style="left:605.30px;top:305.00px;font-size:7.62px;color:#2b2848;">Газовая карта</div><div class="t" style="left:635.70px;top:324.00px;font-size:10.22px;color:#14148c;font-weight:bold;">4.36</div><div class="t" style="left:658.20px;top:324.00px;font-size:10.20px;color:#14148c;font-weight:bold;letter-spacing:-1.242px;">ms</div><div class="t" style="left:692.80px;top:323.00px;font-size:10.56px;color:#14148c;font-weight:bold;">100%</div><div class="cb" style="left:610.3px;top:337.6px"></div><svg style="left:610.3px;top:337.6px" width="11" height="11" viewBox="0 0 11 11"><path d="M2.3 5L4.8 8.8L9.2 1.4" fill="none" stroke="#14122a" stroke-width="1.7"/></svg><div class="t" style="left:624.60px;top:340.00px;font-size:7.58px;color:#2b2848;">Постоянный режим</div><div class="cb" style="left:610.3px;top:355.1px"></div><div class="t" style="left:624.60px;top:358.00px;font-size:7.57px;color:#2b2848;">Видимые точки</div><div class="btn" style="left:607.2px;top:370.1px;width:114.6px;height:15px"></div><div class="t" style="left:650.30px;top:374.00px;font-size:7.30px;color:#2b2848;">Стереть</div><div class="grp" style="left:603.3px;top:393px;width:122.7px;height:75px"></div><div class="a" style="left:603.3px;top:393px;width:91px;height:11.6px;background:#cbc6e6;border-radius:4px 0 4px 0"></div><div class="t" style="left:605.30px;top:396.00px;font-size:7.45px;color:#2b2848;">Коэффициент пересчета</div><div class="btn" style="left:607.2px;top:412px;width:58.6px;height:14.4px"></div><div class="t" style="left:618.70px;top:416.00px;font-size:7.52px;color:#2b2848;">Расчитать</div><div class="btn" style="left:670px;top:412px;width:51.8px;height:14.4px"></div><div class="t" style="left:681.70px;top:416.00px;font-size:7.35px;color:#2b2848;">Стереть</div><div class="cb" style="left:610.3px;top:432.3px"></div><div class="t" style="left:625.10px;top:435.00px;font-size:7.52px;color:#2b2848;">Быстрая адаптация</div><div class="cb" style="left:610.3px;top:449.6px"></div><div class="t" style="left:625.10px;top:453.00px;font-size:7.73px;color:#2b2848;">Ассистент настроек</div><div class="a" style="left:623.8px;top:17.4px;width:104.8px;height:13.8px;background:#dcd9ee;border-radius:3px"></div><div class="t" style="left:627.40px;top:20.00px;font-size:9.20px;color:#1c1a34;font-weight:bold;letter-spacing:-0.045px;">AVANCE 48-6</div><div class="t" style="left:694.30px;top:20.00px;font-size:9.20px;color:#1c1a34;font-weight:bold;letter-spacing:0.017px;">F 10.02</div><div class="a" style="left:732px;top:17.4px;width:136.2px;height:13.8px;background:#dcd9ee;border-radius:3px"></div><div class="t" style="left:751.40px;top:20.00px;font-size:9.50px;color:#1c1a34;font-weight:bold;">ОТКЛЮЧЕНО</div><svg style="left:832px;top:18px" width="34" height="13" viewBox="0 0 34 13"><path d="M7.4 5.8H14.4M19.6 5.8H26.4" stroke="#1c1a34" stroke-width="2.3"/><circle cx="4.8" cy="5.8" r="2.5" fill="#e6e3f4" stroke="#1c1a34" stroke-width="1"/><circle cx="28.7" cy="5.8" r="2.5" fill="#e6e3f4" stroke="#1c1a34" stroke-width="1"/><path d="M13.2 2L20.8 9.6M20.8 2L13.2 9.6" stroke="#e81818" stroke-width="1.6"/></svg><div class="a" style="left:732px;top:34.6px;width:136.4px;height:225px;background:#dddaf0;border-radius:3px"></div><div class="t" style="left:734.10px;top:39.00px;font-size:7.37px;color:#a4622c;">RPM вне диапазона для сбора карты</div><div class="t" style="left:734.10px;top:49.00px;font-size:7.58px;color:#2b2848;">Открыты электромагнитные клапаны</div><div class="a" style="left:734px;top:250.2px;width:131.5px;height:6.8px;background:#b9b3dc;border-radius:3.4px;border:.6px solid #8e88b4"></div><div class="a" style="left:742px;top:250.8px;width:113px;height:5.6px;background:#c6c1e4;border-radius:2.8px"></div><svg style="left:734.2px;top:250.2px" width="6.8" height="6.8" viewBox="0 0 6.8 6.8"><circle cx="3.4" cy="3.4" r="3" fill="#e6e4f2" stroke="#55516e" stroke-width=".6"/><path d="M4 1.6L2.4 3.4L4 5.2" fill="none" stroke="#2b2848" stroke-width=".9"/></svg><svg style="left:858.4px;top:250.2px" width="6.8" height="6.8" viewBox="0 0 6.8 6.8"><circle cx="3.4" cy="3.4" r="3" fill="#e6e4f2" stroke="#55516e" stroke-width=".6"/><path d="M2.8 1.6L4.4 3.4L2.8 5.2" fill="none" stroke="#2b2848" stroke-width=".9"/></svg><div class="tile" style="left:732.3px;top:262.8px;background:#cf9bb8"></div><div class="t" style="left:734.80px;top:266.00px;font-size:10.20px;color:#7a1040;font-family:'DejaVu Sans','Liberation Sans',sans-serif;letter-spacing:1.064px;-webkit-text-stroke:.25px;">ВЫКЛ</div><div class="t" style="left:735.10px;top:300.00px;font-size:6.90px;color:#7a1040;font-weight:bold;letter-spacing:0.019px;-webkit-text-stroke:.15px;">Бензин</div><div class="tile" style="left:778.6px;top:262.8px;background:#98b4d2"></div><div class="t" style="left:780.90px;top:266.00px;font-size:10.20px;color:#1a4a74;font-family:'DejaVu Sans','Liberation Sans',sans-serif;letter-spacing:0.795px;-webkit-text-stroke:.25px;">ВКЛ</div><div class="t" style="left:780.90px;top:300.00px;font-size:6.90px;color:#1a4a74;font-weight:bold;letter-spacing:0.414px;-webkit-text-stroke:.15px;">Газ</div><div class="tile" style="left:825.2px;top:262.8px;background:#8b3a40"></div><div class="t" style="left:827.00px;top:266.00px;font-size:9.69px;color:#ffffff;font-family:'DejaVu Sans','Liberation Sans',sans-serif;-webkit-text-stroke:.25px;">682</div><div class="t" style="left:827.70px;top:300.00px;font-size:6.90px;color:#ffffff;font-weight:bold;letter-spacing:0.183px;-webkit-text-stroke:.15px;">RPM</div><div class="tile" style="left:732.3px;top:313px;background:#d09aac"></div><div class="t" style="left:734.40px;top:316.00px;font-size:10.44px;color:#a8182c;font-family:'DejaVu Sans','Liberation Sans',sans-serif;-webkit-text-stroke:.25px;">2.9ms</div><div class="t" style="left:735.00px;top:340.00px;font-size:6.90px;color:#a8182c;font-weight:bold;letter-spacing:-0.19px;-webkit-text-stroke:.15px;">Впрыск</div><div class="t" style="left:735.00px;top:350.00px;font-size:6.90px;color:#a8182c;font-weight:bold;letter-spacing:0.076px;-webkit-text-stroke:.15px;">бензина</div><div class="tile" style="left:778.6px;top:313px;background:#98a8cc"></div><div class="t" style="left:781.20px;top:317.00px;font-size:9.98px;color:#1c2858;font-family:'DejaVu Sans','Liberation Sans',sans-serif;-webkit-text-stroke:.25px;">4.4ms</div><div class="t" style="left:781.60px;top:340.00px;font-size:6.90px;color:#1c2858;font-weight:bold;letter-spacing:-0.25px;-webkit-text-stroke:.15px;">Впрыск</div><div class="t" style="left:781.60px;top:350.00px;font-size:6.90px;color:#1c2858;font-weight:bold;letter-spacing:0.342px;-webkit-text-stroke:.15px;">газа</div><div class="tile" style="left:825.2px;top:313px;background:#cfb0b4"></div><div class="t" style="left:827.70px;top:316.00px;font-size:10.30px;color:#8a5040;font-family:'DejaVu Sans','Liberation Sans',sans-serif;-webkit-text-stroke:.25px;">14.1В</div><div class="t" style="left:827.70px;top:340.00px;font-size:6.90px;color:#8a5040;font-weight:bold;letter-spacing:0.189px;-webkit-text-stroke:.15px;">Напряжени</div><div class="t" style="left:827.70px;top:350.00px;font-size:6.90px;color:#8a5040;font-weight:bold;letter-spacing:0.073px;-webkit-text-stroke:.15px;">питания</div><div class="tile" style="left:732.3px;top:362.5px;background:#c49ca8"></div><div class="t" style="left:734.60px;top:366.00px;font-size:9.12px;color:#5a1020;font-family:'DejaVu Sans','Liberation Sans',sans-serif;-webkit-text-stroke:.25px;">31</div><div class="t" style="left:748.70px;top:369.00px;font-size:6.84px;color:#5a1020;font-weight:bold;font-family:'DejaVu Sans','Liberation Sans',sans-serif;">kPa</div><div class="t" style="left:735.30px;top:399.00px;font-size:6.90px;color:#5a1020;font-weight:bold;letter-spacing:0.483px;-webkit-text-stroke:.15px;">MAP</div><div class="tile" style="left:778.6px;top:362.5px;background:#a9c0bd"></div><div class="t" style="left:781.40px;top:366.00px;font-size:9.85px;color:#3d7a50;font-family:'DejaVu Sans','Liberation Sans',sans-serif;-webkit-text-stroke:.25px;">119</div><div class="t" style="left:801.60px;top:369.00px;font-size:6.79px;color:#3d7a50;font-weight:bold;font-family:'DejaVu Sans','Liberation Sans',sans-serif;">kPa</div><div class="t" style="left:781.40px;top:390.00px;font-size:6.90px;color:#3d7a50;font-weight:bold;letter-spacing:0.288px;-webkit-text-stroke:.15px;">Давление</div><div class="t" style="left:781.40px;top:399.00px;font-size:6.90px;color:#3d7a50;font-weight:bold;letter-spacing:0.209px;-webkit-text-stroke:.15px;">газа</div><div class="tile" style="left:825.2px;top:362.5px;background:#a5b0a8"></div><div class="t" style="left:827.10px;top:366.00px;font-size:9.90px;color:#122c08;font-family:'DejaVu Sans','Liberation Sans',sans-serif;-webkit-text-stroke:.25px;">0</div><div class="t" style="left:834.40px;top:366.00px;font-size:8.98px;color:#122c08;font-weight:bold;font-family:'DejaVu Sans','Liberation Sans',sans-serif;">%</div><div class="t" style="left:827.10px;top:390.00px;font-size:6.90px;color:#122c08;font-weight:bold;letter-spacing:0.359px;-webkit-text-stroke:.15px;">Нагрузка</div><div class="t" style="left:827.10px;top:399.00px;font-size:6.90px;color:#122c08;font-weight:bold;letter-spacing:0.587px;-webkit-text-stroke:.15px;">двигателя</div><div class="tile" style="left:732.3px;top:412.5px;background:#c4a0d6"></div><div class="t" style="left:734.10px;top:416.00px;font-size:10.12px;color:#5e1a86;font-family:'DejaVu Sans','Liberation Sans',sans-serif;-webkit-text-stroke:.25px;">58°C</div><div class="t" style="left:735.30px;top:440.00px;font-size:6.90px;color:#5e1a86;font-weight:bold;letter-spacing:0.257px;-webkit-text-stroke:.15px;">Темпер.</div><div class="t" style="left:734.60px;top:449.00px;font-size:6.90px;color:#5e1a86;font-weight:bold;letter-spacing:0.43px;-webkit-text-stroke:.15px;">редуктора</div><div class="tile" style="left:778.6px;top:412.5px;background:#98c2bc"></div><div class="t" style="left:781.00px;top:416.00px;font-size:9.83px;color:#0d6050;font-family:'DejaVu Sans','Liberation Sans',sans-serif;-webkit-text-stroke:.25px;">22°C</div><div class="t" style="left:781.40px;top:440.00px;font-size:6.90px;color:#0d6050;font-weight:bold;letter-spacing:0.19px;-webkit-text-stroke:.15px;">Темпер.</div><div class="t" style="left:781.40px;top:449.00px;font-size:6.90px;color:#0d6050;font-weight:bold;letter-spacing:0.209px;-webkit-text-stroke:.15px;">газа</div><div class="tile" style="left:825.2px;top:412.5px;background:#c69ac6"></div><div class="t" style="left:827.10px;top:415.00px;font-size:10.51px;color:#9c1e84;font-family:'DejaVu Sans','Liberation Sans',sans-serif;-webkit-text-stroke:.25px;">0В</div><div class="t" style="left:828.10px;top:449.00px;font-size:6.90px;color:#9c1e84;font-weight:bold;letter-spacing:0.222px;-webkit-text-stroke:.15px;">Лямбда 1</div><div class="tile" style="left:732.3px;top:462px;background:#b3ae9e"></div><div class="t" style="left:734.60px;top:465.00px;font-size:10.28px;color:#55560e;font-family:'DejaVu Sans','Liberation Sans',sans-serif;-webkit-text-stroke:.25px;">0В</div><div class="t" style="left:735.30px;top:499.00px;font-size:6.90px;color:#55560e;font-weight:bold;letter-spacing:0.294px;-webkit-text-stroke:.15px;">Лямбда 2</div><div class="tile" style="left:778.6px;top:462px;background:#a3c6a9"></div><div class="t" style="left:781.40px;top:465.00px;font-size:9.59px;color:#2f7a1c;font-family:'DejaVu Sans','Liberation Sans',sans-serif;-webkit-text-stroke:.25px;">247</div><div class="t" style="left:781.40px;top:489.00px;font-size:6.90px;color:#2f7a1c;font-weight:bold;letter-spacing:0.057px;-webkit-text-stroke:.15px;">Уровень</div><div class="t" style="left:781.40px;top:499.00px;font-size:6.90px;color:#2f7a1c;font-weight:bold;letter-spacing:0.209px;-webkit-text-stroke:.15px;">газа</div><div class="a" style="left:732.8px;top:511.8px;width:135.6px;height:41.8px;background:#dedbf0;border-radius:3px"></div><div class="t" style="left:838.50px;top:515.00px;font-size:7.37px;color:#3a3654;">Богатая</div><div class="t" style="left:841.00px;top:546.00px;font-size:7.10px;color:#3a3654;">Бедная</div><svg style="left:0;top:0" width="874" height="700" viewBox="0 0 874 700"><path d="M736 541.6H864.6M736.2 541.6v-2M749.0 541.6v-2M761.9 541.6v-2M774.7 541.6v-2M787.5 541.6v-2M800.4 541.6v-2M813.2 541.6v-2M826.0 541.6v-2M838.8 541.6v-2M851.7 541.6v-2M864.5 541.6v-2" stroke="#3a3654" stroke-width=".9" fill="none"/></svg><div class="a" style="left:732.8px;top:558px;width:135.6px;height:80.4px;background:#dedbf0;border-radius:3px"></div><div class="a" style="left:732.8px;top:558px;width:25.8px;height:10.2px;background:#78738f;border-radius:0 0 4px 0"></div><div class="t" style="left:734.60px;top:561.00px;font-size:6.30px;color:#fff;font-weight:bold;font-family:'DejaVu Sans','Liberation Sans',sans-serif;letter-spacing:-0.592px;">Банк 1</div><div class="t" style="left:734.60px;top:572.00px;font-size:6.65px;color:#2b2848;">AFR</div><div class="a" style="left:862.6px;top:573.8px;width:2.8px;height:1.4px;background:#1c1a34"></div><div class="t" style="left:734.60px;top:582.00px;font-size:7.40px;color:#2b2848;">Коррекция</div><div class="t" style="left:852.40px;top:582.00px;font-size:9.28px;color:#1c1a34;font-weight:bold;">0.0</div><div class="t" style="left:734.60px;top:595.00px;font-size:6.60px;color:#2b2848;">STFT</div><div class="a" style="left:862.6px;top:597.0px;width:2.8px;height:1.4px;background:#1c1a34"></div><div class="t" style="left:734.60px;top:606.00px;font-size:6.83px;color:#2b2848;">LTFT</div><div class="a" style="left:862.6px;top:608.5px;width:2.8px;height:1.4px;background:#1c1a34"></div><div class="t" style="left:734.60px;top:618.00px;font-size:6.73px;color:#2b2848;">O2S1</div><div class="a" style="left:862.6px;top:620.1px;width:2.8px;height:1.4px;background:#1c1a34"></div><div class="t" style="left:734.60px;top:630.00px;font-size:6.73px;color:#2b2848;">O2S2</div><div class="a" style="left:862.6px;top:631.7px;width:2.8px;height:1.4px;background:#1c1a34"></div><div class="a" style="left:732.8px;top:643px;width:135.6px;height:23.6px;background:#dedbf0;border-radius:3px"></div><svg style="left:738px;top:645px" width="36" height="20" viewBox="0 0 36 20"><path d="M3.4 1.6H32Q34.4 1.6 34 4L32.2 14.4Q31.6 17.8 28.4 17.8H7Q3.8 17.8 3.2 14.4L1.4 4Q1 1.6 3.4 1.6Z" fill="none" stroke="#d8222c" stroke-width="1.6"/><path d="M6.4 5.6H29.6M7 9.4H29M7.6 13.2H22" stroke="#d8222c" stroke-width="2.6" stroke-dasharray="2.8 1.1" fill="none"/><path d="M24.4 13.2H28.6" stroke="#d8222c" stroke-width="2.6"/></svg><div class="a" style="left:871.4px;top:0px;width:2.6px;height:35.4px;background:#0a0a0c"></div><div class="a" style="left:871.4px;top:35.4px;width:2.6px;height:198.2px;background:#9fd9ea"></div><div class="a" style="left:871.4px;top:233.6px;width:2.6px;height:4.400000000000006px;background:#c8b840"></div><div class="a" style="left:871.4px;top:238px;width:2.6px;height:5px;background:#48a8b0"></div><div class="a" style="left:871.4px;top:243px;width:2.6px;height:57px;background:#f0e236"></div><div class="a" style="left:871.4px;top:300px;width:2.6px;height:23px;background:#ececf4"></div><div class="a" style="left:871.4px;top:323px;width:2.6px;height:5px;background:#5a5a66"></div><div class="a" style="left:871.4px;top:328px;width:2.6px;height:8.399999999999977px;background:#ececf4"></div><div class="a" style="left:871.4px;top:336.4px;width:2.6px;height:40.60000000000002px;background:#6c6a82"></div><div class="a" style="left:871.4px;top:377px;width:2.6px;height:5px;background:#e6e44a"></div><div class="a" style="left:871.4px;top:382px;width:2.6px;height:23.5px;background:#b0a8d0"></div><div class="a" style="left:871.4px;top:405.5px;width:2.6px;height:163.89999999999998px;background:#30a838"></div><div class="a" style="left:871.4px;top:569.4px;width:2.6px;height:36.0px;background:#9490c0"></div><div class="a" style="left:871.4px;top:605.4px;width:2.6px;height:35.200000000000045px;background:#f0e630"></div><div class="a" style="left:871.4px;top:640.6px;width:2.6px;height:15.399999999999977px;background:#e8b830"></div><div class="a" style="left:871.4px;top:656px;width:2.6px;height:15px;background:#55555c"></div><div class="a" style="left:0;top:670.8px;width:874px;height:26.2px;background:linear-gradient(90deg,#23282c 0%,#34383a 5%,#3c3e3e 12%,#2e3032 20%,#3a3a3a 30%,#3c3c3c 43%,#4a4844 46%,#46423c 51%,#343a42 56%,#363e48 65%,#2c333c 75%,#1e242a 85%,#1a1e24 100%)"></div><div class="a" style="left:0;top:670.8px;width:874px;height:1.2px;background:rgba(150,156,166,.55)"></div><div class="a" style="left:0;top:672px;width:874px;height:10px;background:linear-gradient(180deg,rgba(255,255,255,.16),rgba(255,255,255,.03))"></div><div class="a" style="left:0;top:697px;width:874px;height:3px;background:#000"></div><div class="a" style="left:5.6px;top:671.7px;width:24.4px;height:24.4px;border-radius:50%;background:radial-gradient(circle at 50% 30%,#7fd0f0 0%,#2a8ed0 38%,#14589c 62%,#1a78a8 82%,#38c0d8 100%);box-shadow:0 0 2px #0a2840"></div><svg style="left:10px;top:676px" width="16" height="16" viewBox="0 0 16 16"><path d="M1.2 3.2Q4 1.8 7 3V7.4Q4 6.2 1.2 7.6Z" fill="#e8602c"/><path d="M8.2 3.2Q11 4.2 14 2.8V7.2Q11 8.6 8.2 7.6Z" fill="#7cc43c"/><path d="M1.2 8.8Q4 7.4 7 8.6V13Q4 11.8 1.2 13.2Z" fill="#3c9ce0"/><path d="M8.2 8.8Q11 9.8 14 8.4V12.8Q11 14.2 8.2 13.2Z" fill="#f4c030"/></svg><svg style="left:50px;top:672px" width="20" height="23" viewBox="0 0 20 23"><path d="M1.2 1H14L18.6 5.6V21.6H1.2Z" fill="#2c1c92"/><path d="M14 1V5.6H18.6Z" fill="#8a80d8"/><path d="M2.6 3.2L9.4 13.2Q11 15.4 12.4 13.8M4.8 2.4L11.4 12.2" stroke="#fff" stroke-width="1.5" fill="none"/><path d="M10.6 13.2L14 10.8L17.8 16.4L13 19.8Z" fill="#f09a28"/><path d="M13 19.8L16 20.8L17.8 16.4Z" fill="#f8c880"/></svg><svg style="left:92px;top:672px" width="22" height="23" viewBox="0 0 22 23"><path d="M11 2.4L20 11.4L11 20.4L2 11.4Z" fill="#f4f4f4" stroke="#3a3a3a" stroke-width="1.2"/><path d="M17 3.4L8.6 9.6L11.4 11L4.4 19.2L14 12.6L11 11.2Z" fill="#f09a28" stroke="#b86a10" stroke-width=".6"/></svg><div class="a" style="left:134.6px;top:672.6px;width:21.4px;height:21.4px;border-radius:50%;background:radial-gradient(circle at 40% 35%,#9a30d0,#6c12a8 60%,#4c0c80)"></div><svg style="left:134.6px;top:672.6px" width="21.4" height="21.4" viewBox="0 0 21.4 21.4"><path d="M10.7 3A7.7 7.7 0 0 1 10.7 18.4M10.7 6A4.7 4.7 0 0 1 10.7 15.4" fill="none" stroke="#e8b8f8" stroke-width="1.6"/><path d="M10.7 8.6A2.1 2.1 0 0 1 10.7 12.8Z" fill="#e8b8f8"/></svg><svg style="left:176px;top:672px" width="24" height="23" viewBox="0 0 24 23"><ellipse cx="12" cy="11.3" rx="10.4" ry="10.6" fill="#e2202c"/><ellipse cx="12" cy="11.3" rx="4.6" ry="7.8" fill="#2e2c2e"/></svg><div class="a" style="left:209.8px;top:670.8px;width:39.2px;height:25.4px;border-radius:2px;background:linear-gradient(160deg,#a2a2a4 0%,#86878a 45%,#5e6064 55%,#6a6c70 100%);border:1px solid rgba(200,204,210,.55);box-shadow:inset 0 0 0 .6px rgba(255,255,255,.18)"></div><div class="a" style="left:252.4px;top:670.8px;width:38.8px;height:25.4px;border-radius:2px;background:linear-gradient(160deg,#74767a 0%,#5a5c60 45%,#3e4044 55%,#4a4c50 100%);border:1px solid rgba(200,204,210,.55);box-shadow:inset 0 0 0 .6px rgba(255,255,255,.18)"></div><div class="a" style="left:294.4px;top:670.8px;width:39px;height:25.4px;border-radius:2px;background:linear-gradient(160deg,#54565c 0%,#404248 45%,#2a2c32 55%,#34363c 100%);border:1px solid rgba(200,204,210,.55);box-shadow:inset 0 0 0 .6px rgba(255,255,255,.18)"></div><div class="a" style="left:336.4px;top:670.8px;width:39.4px;height:25.4px;border-radius:2px;background:linear-gradient(160deg,#b4b4b6 0%,#9c9c9e 45%,#7a7a7e 55%,#8a8a8e 100%);border:1px solid rgba(200,204,210,.55);box-shadow:inset 0 0 0 .6px rgba(255,255,255,.18)"></div><div class="a" style="left:219.2px;top:673.4px;width:21px;height:21px;border-radius:50%;background:radial-gradient(circle at 52% 42%,#6a2ac0 0%,#7a2ab8 22%,#f0501c 40%,#f8801c 66%,#fcc02c 100%)"></div><svg style="left:219.2px;top:671.4px" width="21" height="23" viewBox="0 0 21 23"><path d="M12.4 1.2Q18.6 4 19.6 10Q17.6 6.6 14.4 6.2Q12 4.2 12.4 1.2Z" fill="#fcc02c"/><path d="M2.4 8.6Q4 5 7.6 4.6Q6.6 6.6 8.4 8.2Q5 8 2.4 8.6" fill="#f8801c"/></svg><svg style="left:259.6px;top:672.6px" width="26" height="22" viewBox="0 0 26 22"><path d="M1.4 3.4H9.4L11 5.2H23.4V19H1.4Z" fill="#e8c860"/><path d="M3 1.6H20V8H3Z" fill="#f4f0d0"/><path d="M1 7.6H24.6L23.4 19.6H2.2Z" fill="#f0d878"/><path d="M5.4 11.4H20V18H5.4Z" fill="#7cc0e8"/><path d="M5.4 14.6H20V18H5.4Z" fill="#4c9c5c"/><path d="M3 19.6H22.6V21H3Z" fill="#a8b8c8"/></svg><svg style="left:302.6px;top:673.4px" width="24" height="21" viewBox="0 0 24 21"><rect x="9.6" y="1.4" width="13" height="18.2" fill="#f4f4f6"/><path d="M12 4.8H21M12 7.8H21M12 10.8H21M12 13.8H21M12 16.8H21" stroke="#8a96a8" stroke-width="1.3"/><path d="M.8 2.6L13 .8V20.2L.8 18.4Z" fill="#1f5bb0"/><text x="6.8" y="14.2" font-family="Liberation Sans,sans-serif" font-weight="bold" font-size="9.4" fill="#fff" text-anchor="middle">W</text></svg><svg style="left:344.6px;top:672.4px" width="23" height="23" viewBox="0 0 23 23"><path d="M11.5 2.6L22.2 11.5L11.5 20.4L0.8 11.5Z" fill="#3c2c8c"/><text x="11.6" y="14.4" font-family="Liberation Sans,sans-serif" font-weight="bold" font-size="8" fill="#f0eef8" text-anchor="middle" letter-spacing="-1">EG</text></svg><svg style="left:728px;top:672px" width="82" height="24" viewBox="0 0 82 24"><path d="M3.4 14.2L5.8 11L8.2 14.2Z" fill="#e8e8ec"/><path d="M19.4 8V17.6" stroke="#f0f0f4" stroke-width="1.3"/><path d="M20.4 8.2Q22.6 7.2 24.6 8.4T28.4 8.6V13.4Q26.6 14.4 24.6 13.2T20.4 13Z" fill="#f0f0f4"/><rect x="35.6" y="9.4" width="7" height="6" fill="none" stroke="#e8e8ec" stroke-width="1.2"/><path d="M34 8H37.4M36 16.8V18.6H42.4M40.4 17.6H43.6" stroke="#e8e8ec" stroke-width="1.1" fill="none"/><path d="M51 11H53L56 8.2V17L53 14.2H51Z" fill="#f0f0f4"/><path d="M57.6 10.4Q59 12.6 57.6 14.8M59.6 8.8Q62 12.6 59.6 16.4" stroke="#e8e8ec" stroke-width="1" fill="none"/><rect x="65" y="7" width="11.6" height="9.6" fill="#14168c"/><text x="70.8" y="14.6" font-family="Liberation Sans,sans-serif" font-size="7.6" fill="#fff" text-anchor="middle">Ru</text></svg><div class="t" style="left:826.40px;top:675.00px;font-size:7.35px;color:#fff;">21:57</div><div class="t" style="left:817.10px;top:688.00px;font-size:7.13px;color:#fff;">02.05.2021</div><div class="a" style="left:862.6px;top:671.4px;width:8px;height:25.2px;border:1px solid rgba(170,176,186,.6);background:linear-gradient(90deg,rgba(90,96,106,.8),rgba(40,44,52,.8));border-radius:1px"></div></div></body></html>
